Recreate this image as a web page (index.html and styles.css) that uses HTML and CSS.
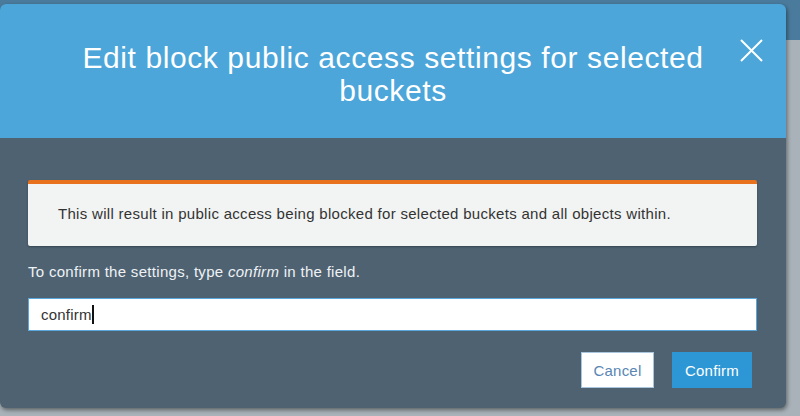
FILE: index.html
```html
<!DOCTYPE html>
<html lang="en">
<head>
<meta charset="utf-8">
<title>Edit block public access settings</title>
<link rel="stylesheet" href="styles.css">
</head>
<body>
<div class="modal">
  <div class="modal-header">
    <h1 class="modal-title">Edit block public access settings for selected buckets</h1>
    <button class="close" aria-label="Close">
      <svg width="23" height="23" viewBox="0 0 23 23"><path d="M1 1L22 22M22 1L1 22" stroke="#ffffff" stroke-width="2" fill="none"/></svg>
    </button>
  </div>
  <div class="modal-body">
    <div class="alert">This will result in public access being blocked for selected buckets and all objects within.</div>
    <p class="label">To confirm the settings, type <em>confirm</em> in the field.</p>
    <div class="field"><span class="value">confirm</span><span class="caret"></span></div>
    <div class="actions">
      <button class="btn btn-cancel">Cancel</button>
      <button class="btn btn-confirm">Confirm</button>
    </div>
  </div>
</div>
</body>
</html>
```
FILE: styles.css
```css
html, body {
  margin: 0;
  padding: 0;
}
body {
  width: 800px;
  height: 416px;
  overflow: hidden;
  font-family: "Liberation Sans", Arial, sans-serif;
  background: linear-gradient(to bottom, #4b7b9c 0, #4b7b9c 40px, #a8b2b8 40px, #a8b2b8 100%);
  padding-top: 4px;
  box-sizing: border-box;
}
.modal {
  width: 786px;
  height: 404px;
  border-radius: 6px;
  overflow: hidden;
  background: #4e6272;
  box-shadow: 1px 2px 4px rgba(0, 0, 0, 0.45);
  display: flex;
  flex-direction: column;
}
.modal-header {
  position: relative;
  background: #4ca6da;
  height: 134px;
  box-sizing: border-box;
  padding: 37px 60px 0;
}
.modal-title {
  margin: 0;
  font-weight: normal;
  font-size: 30px;
  letter-spacing: 0.6px;
  line-height: 33px;
  color: #ffffff;
  text-align: center;
}
.close {
  position: absolute;
  top: 34px;
  right: 22px;
  padding: 0;
  border: 0;
  background: none;
  width: 25px;
  height: 25px;
  display: flex;
  align-items: center;
  justify-content: center;
}
.modal-body {
  flex: 1;
  padding: 42px 29px 20px 28px;
  display: flex;
  flex-direction: column;
}
.alert {
  background: #f2f3f3;
  border-top: 4px solid #e7711d;
  border-radius: 2px;
  box-shadow: 0 1px 2px rgba(0, 0, 0, 0.3);
  padding: 20px 30px 22px;
  font-size: 15px;
  letter-spacing: 0.3px;
  line-height: 20px;
  color: #333333;
}
.label {
  margin: 16px 0 0;
  font-size: 15px;
  letter-spacing: 0.3px;
  line-height: 20px;
  color: #eef2f5;
}
.label em {
  font-style: italic;
}
.field {
  margin-top: 16px;
  height: 33px;
  box-sizing: border-box;
  background: #ffffff;
  border: 1px solid #5aa7dc;
  padding: 0 12px;
  display: flex;
  align-items: center;
  font-size: 15px;
  letter-spacing: 0.2px;
  color: #333333;
}
.caret {
  display: inline-block;
  width: 2px;
  height: 19px;
  background: #111111;
  margin-left: 0;
}
.actions {
  margin-top: 21px;
  margin-right: 5px;
  display: flex;
  justify-content: flex-end;
  gap: 18px;
}
.btn {
  height: 36px;
  font-family: "Liberation Sans", Arial, sans-serif;
  font-size: 15px;
  letter-spacing: 0.2px;
  padding: 0;
  cursor: pointer;
}
.btn-cancel {
  width: 73px;
  background: #ffffff;
  border: 1px solid #a9c6de;
  color: #5a86b4;
}
.btn-confirm {
  width: 80px;
  background: #2d96d5;
  border: 0;
  color: #ffffff;
}
```
